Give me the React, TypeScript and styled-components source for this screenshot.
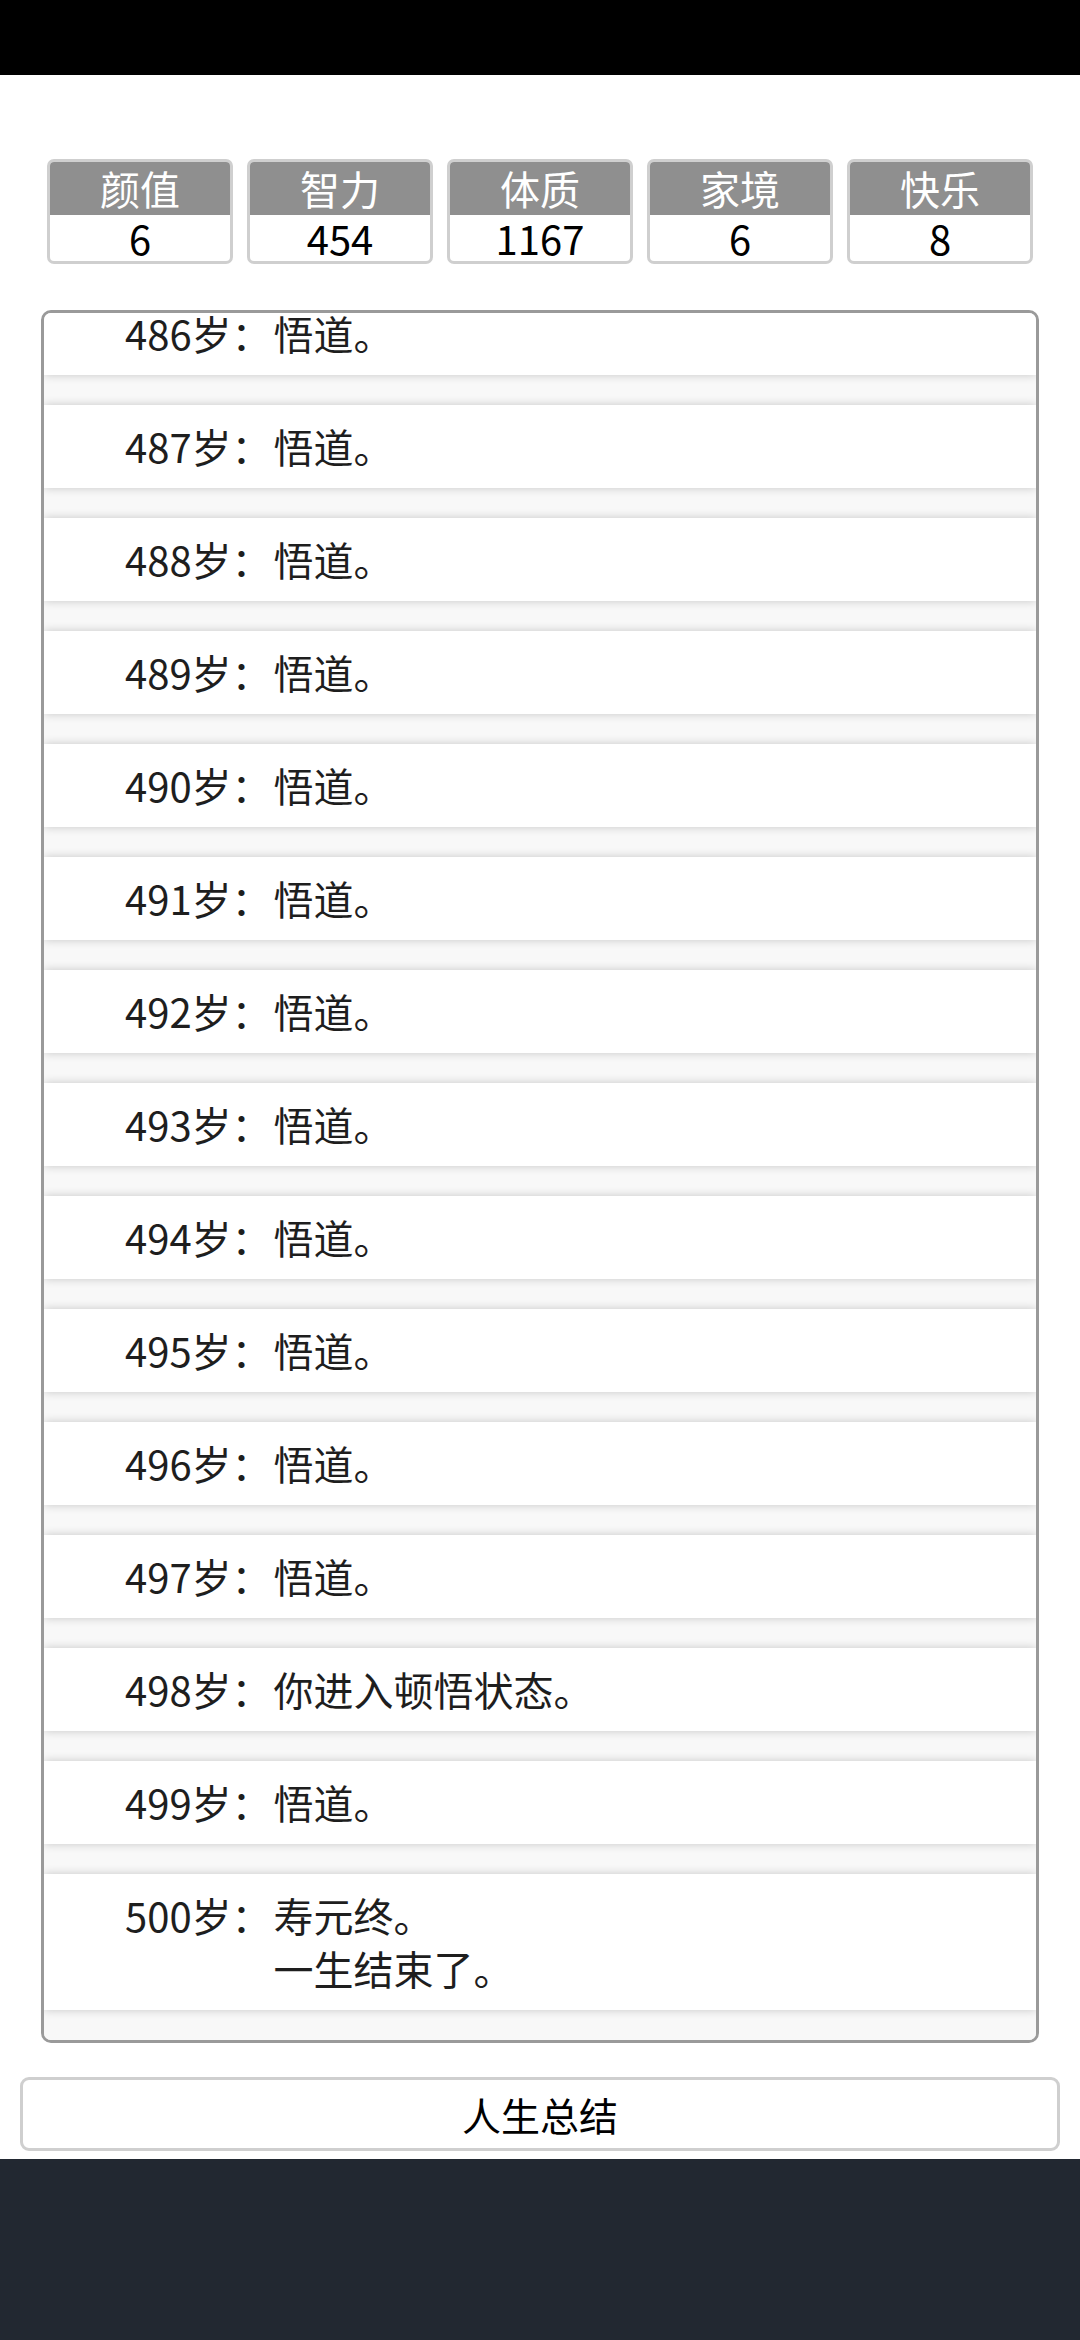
import React, { useLayoutEffect, useRef } from "react";
import styled, { createGlobalStyle } from "styled-components";

const GlobalStyle = createGlobalStyle`
  html, body {
    margin: 0;
    padding: 0;
    background: #fff;
  }
  body {
    font-family: "Noto Sans CJK SC", "Noto Sans", sans-serif;
  }
  * {
    box-sizing: border-box;
  }
`;

const Screen = styled.div`
  width: 1080px;
  height: 2340px;
  display: flex;
  flex-direction: column;
  align-items: center;
  background: #fff;
  overflow: hidden;
`;

const StatusBar = styled.div`
  width: 100%;
  height: 75px;
  flex-shrink: 0;
  background: #000;
`;

const StatsRow = styled.div`
  margin-top: 84px;
  width: 986px;
  display: grid;
  grid-template-columns: repeat(5, 1fr);
  gap: 14px;
`;

const StatBox = styled.div`
  height: 105px;
  border: 3px solid #cfcfcf;
  border-radius: 7px;
  overflow: hidden;
  display: flex;
  flex-direction: column;
  background: #fff;
`;

const StatLabel = styled.div`
  height: 53px;
  line-height: 53px;
  background: #8f8f8f;
  color: #fff;
  font-size: 40px;
  text-align: center;
`;

const StatValue = styled.div`
  flex: 1;
  line-height: 46px;
  color: #000;
  font-size: 40px;
  text-align: center;
`;

const LogList = styled.ul`
  margin: 46px 0 0;
  padding: 0;
  list-style: none;
  width: 998px;
  height: 1733px;
  flex-shrink: 0;
  border: 3px solid #9a9a9a;
  border-radius: 10px;
  background: #f8f8f8;
  overflow-y: auto;
  scrollbar-width: none;
  &::-webkit-scrollbar {
    display: none;
  }
`;

const LogRow = styled.li`
  display: flex;
  padding: 15px 0 15px 81px;
  margin-bottom: 30px;
  background: #fff;
  box-shadow: 0 0 9px rgba(0, 0, 0, 0.2);
  font-size: 40px;
  line-height: 53px;
  color: #1e1e1e;
`;

const Age = styled.span`
  flex-shrink: 0;
  padding-right: 2px;
`;

const Events = styled.div`
  display: flex;
  flex-direction: column;
`;

const SummaryButton = styled.button`
  margin-top: 34px;
  width: 1040px;
  height: 74px;
  flex-shrink: 0;
  border: 3px solid #cfcfcf;
  border-radius: 9px;
  background: #fff;
  color: #000;
  font-family: "Noto Sans CJK SC", "Noto Sans", sans-serif;
  font-size: 39px;
  padding: 0;
`;

const NavBar = styled.div`
  margin-top: 8px;
  width: 100%;
  flex: 1;
  background: #222831;
`;

const stats = [
  { label: "颜值", value: 6 },
  { label: "智力", value: 454 },
  { label: "体质", value: 1167 },
  { label: "家境", value: 6 },
  { label: "快乐", value: 8 },
];

type LogEntry = { age: number; events: string[] };

const buildLog = (): LogEntry[] => {
  const entries: LogEntry[] = [];
  for (let age = 480; age <= 500; age++) {
    if (age === 498) entries.push({ age, events: ["你进入顿悟状态。"] });
    else if (age === 500) entries.push({ age, events: ["寿元终。", "一生结束了。"] });
    else entries.push({ age, events: ["悟道。"] });
  }
  return entries;
};

const log = buildLog();

export default function App() {
  const listRef = useRef<HTMLUListElement>(null);

  // keep the log scrolled to the latest year
  useLayoutEffect(() => {
    const el = listRef.current;
    if (el) el.scrollTop = el.scrollHeight;
  }, []);

  return (
    <>
      <GlobalStyle />
      <Screen>
        <StatusBar />
        <StatsRow>
          {stats.map((s) => (
            <StatBox key={s.label}>
              <StatLabel>{s.label}</StatLabel>
              <StatValue>{s.value}</StatValue>
            </StatBox>
          ))}
        </StatsRow>
        <LogList ref={listRef}>
          {log.map((entry) => (
            <LogRow key={entry.age}>
              <Age>{entry.age}岁：</Age>
              <Events>
                {entry.events.map((e) => (
                  <span key={e}>{e}</span>
                ))}
              </Events>
            </LogRow>
          ))}
        </LogList>
        <SummaryButton>人生总结</SummaryButton>
        <NavBar />
      </Screen>
    </>
  );
}
